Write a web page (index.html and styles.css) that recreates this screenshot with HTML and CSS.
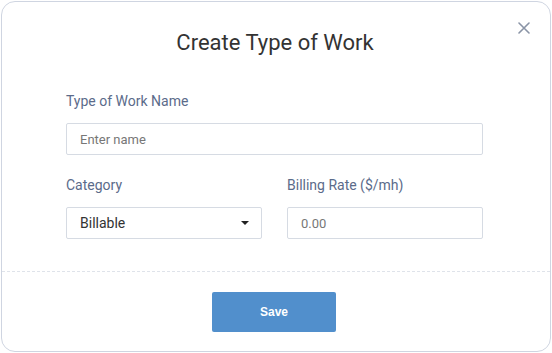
FILE: index.html
```html
<!DOCTYPE html>
<html lang="en">
<head>
  <meta charset="UTF-8">
  <meta name="viewport" content="width=device-width, initial-scale=1.0">
  <title>Create Type of Work</title>
  <link rel="stylesheet" href="styles.css">
</head>
<body>

<div class="modal">
  <button class="close" aria-label="Close">
    <svg width="12" height="12" viewBox="0 0 12 12">
      <path d="M1 1L11 11M11 1L1 11" stroke="#8a94a6" stroke-width="1.6" stroke-linecap="round"/>
    </svg>
  </button>

  <h2 class="modal-title">Create Type of Work</h2>

  <form class="modal-body">
    <div class="field">
      <label for="name">Type of Work Name</label>
      <input type="text" id="name" placeholder="Enter name">
    </div>

    <div class="row">
      <div class="field">
        <label for="category">Category</label>
        <div class="select">
          <span>Billable</span>
          <svg width="8" height="4" viewBox="0 0 8 4"><path d="M0 0H8L4 4Z" fill="#222"/></svg>
        </div>
      </div>
      <div class="field">
        <label for="rate">Billing Rate ($/mh)</label>
        <input type="text" id="rate" placeholder="0.00">
      </div>
    </div>
  </form>

  <div class="modal-footer">
    <button class="save">Save</button>
  </div>
</div>

</body>
</html>
```

FILE: styles.css
```css
body {
  margin: 0;
  padding: 1px;
  background: #ffffff;
  font-family: Roboto, "Liberation Sans", sans-serif;
}

/* Modal */
.modal {
  position: relative;
  width: 548px;
  height: 349px;
  background: #ffffff;
  border: 1px solid #cfd5e1;
  border-radius: 14px;
  display: flex;
  flex-direction: column;
}

.close {
  position: absolute;
  top: 20px;
  right: 20px;
  padding: 0;
  border: none;
  background: none;
  cursor: pointer;
  line-height: 0;
}

.modal-title {
  margin: 28px 0 0;
  padding-right: 2px;
  text-align: center;
  font-size: 22px;
  font-weight: 400;
  line-height: 26px;
  color: #333333;
}

.modal-body {
  padding: 0 67px 0 64px;
  margin-top: 36px;
  display: flex;
  flex-direction: column;
  gap: 21px;
}

.row {
  display: grid;
  grid-template-columns: 196px 196px;
  gap: 25px;
}

.field label {
  display: block;
  font-size: 14px;
  line-height: 18px;
  color: #5b6b8a;
  margin-bottom: 13px;
}

.field input,
.select {
  box-sizing: border-box;
  width: 100%;
  height: 32px;
  padding: 0 13px;
  border: 1px solid #d6dbe3;
  border-radius: 2px;
  font-family: inherit;
  font-size: 13px;
  color: #333333;
  background: #ffffff;
}

.field input::placeholder {
  color: #777777;
}

.select {
  display: flex;
  align-items: center;
  justify-content: space-between;
  font-size: 14px;
  padding-right: 12px;
}

/* Footer */
.modal-footer {
  margin-top: 32px;
  border-top: 1px dashed #dfe3ea;
  padding: 20px 4px 0 0;
  display: flex;
  justify-content: center;
}

.save {
  width: 124px;
  height: 40px;
  border: none;
  border-radius: 2px;
  background: #518fcc;
  color: #ffffff;
  font-family: "Liberation Sans", Arial, sans-serif;
  font-size: 12px;
  font-weight: bold;
  cursor: pointer;
}
```
